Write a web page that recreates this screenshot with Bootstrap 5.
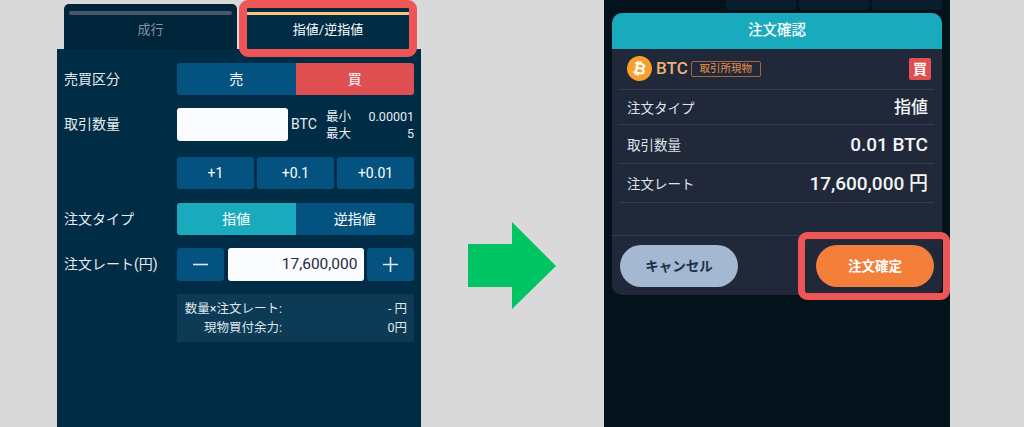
<!DOCTYPE html>
<html lang="ja">
<head>
<meta charset="UTF-8">
<title>注文確認</title>
<link rel="stylesheet" href="https://cdn.jsdelivr.net/npm/bootstrap@5.3.0/dist/css/bootstrap.min.css">
<style>
html, body { height: 427px; overflow: hidden; }
body { background: #d9d9d9; font-family: Roboto, "Noto Sans CJK JP", sans-serif; color: #e8edf2; }
.stage { height: 427px; padding-left: 57px; }

/* left phone */
.order-phone { position: relative; width: 364px; height: 427px; }
.tab-strip { height: 49px; padding: 4px 11px 0 7px; gap: 10px; }
.tab-off, .tab-on { height: 45px; border-radius: 5px 5px 0 0; font-size: 13px; padding-top: 7px; line-height: 19px; }
.tab-off { width: 173px; background: #00243a; color: #87929c; }
.tab-on { width: 162px; margin-top: 4px; height: 41px; padding-top: 0; background: #002c45; color: #fff; border-radius: 0; }
.tab-bar { height: 4px; margin: 0 5px 5px; border-radius: 2px; background: #47586a; }
.tab-on .tab-bar { height: 3px; margin: 4px 0 5px; background: #fbc77a; border-radius: 0; }
.order-panel { height: 378px; background: #002c45; padding: 14px 7px 0 7px; }
.field-row { height: 32px; margin-bottom: 13px; }
.field-tall { height: 33px; }
.field-qty { height: 33px; margin-bottom: 16px; }
.field-label { width: 113px; font-size: 14px; color: #e6ebef; flex-shrink: 0; }
.seg-btn { height: 32px; background: #04527f; color: #fff; border: 0; border-radius: 3px; font-size: 14px; padding: 0; }
.seg-left { border-radius: 3px 0 0 3px; }
.seg-right { border-radius: 0 3px 3px 0; }
.seg-buy { background: #e04f52; }
.seg-type { background: #19aabd; }
.qty-input { width: 111px; height: 33px; background: #fbfcff; border-radius: 3px; }
.qty-unit { width: 38px; padding-left: 3px; font-size: 14px; }
.qty-limits { width: 88px; font-size: 12.5px; line-height: 17px; }
.step-row { gap: 3px; height: 32px; margin-bottom: 14px; margin-left: 113px; }
.step-btn { flex: 1 1 0; }
.rate-input { width: 136px; height: 33px; background: #fbfcff; border-radius: 3px; color: #1f2c38; font-size: 15.5px; text-align: right; line-height: 33px; padding-right: 6px; }
.rate-btn { width: 47px; height: 33px; }
.rate-btn svg { display: block; margin: 0 auto; }
.info-box { margin-left: 113px; height: 48px; background: #0d3a54; padding: 6px 7px 0 7px; font-size: 12.5px; line-height: 18.5px; color: #dfe6ec; }
.info-key { width: 98px; text-align: right; white-space: nowrap; }

/* arrow */
.go-arrow { width: 88px; height: 87px; margin: 222px 48px 0 47px; }

/* right phone */
.confirm-phone { position: relative; width: 346px; height: 427px; background: #04121c; padding: 0 8px; }
.ghost-row { height: 13px; padding-left: 114px; gap: 3px; }
.ghost-btn { width: 74px; height: 10px; background: #081e2c; border-radius: 0 0 3px 3px; }
.confirm-box { height: 282px; background: #20283a; border-radius: 10px; }
.confirm-head { height: 36px; background: #19aabd; border-radius: 10px 10px 0 0; color: #fff; font-size: 14.5px; font-weight: 500; line-height: 36px; text-align: center; }
.confirm-list { padding: 0 8px 0 7px; height: 186px; }
.coin-row { height: 40.5px; border-bottom: 1px solid #333d50; padding: 0 3px 0 8px; }
.coin-mark { width: 25px; height: 25px; border-radius: 50%; background: #f7a12c; color: #fff; font-family: "DejaVu Sans", sans-serif; font-size: 16px; font-weight: 700; line-height: 25px; text-align: center; transform: rotate(12deg); }
.coin-name { font-size: 17px; font-weight: 500; color: #eab273; margin: 0 3px 0 4px; }
.spot-tag { width: 70px; height: 16px; border: 1px solid #a8683a; border-radius: 2px; font-size: 10.5px; font-weight: 500; line-height: 14px; color: #d58243; text-align: center; }
.buy-tag { width: 22px; height: 22px; background: #e04f52; border-radius: 2px; color: #fff; font-size: 14px; font-weight: 700; line-height: 22px; text-align: center; }
.line-row { border-bottom: 1px solid #333d50; padding: 2px 6px 0 8px; font-size: 13.5px; color: #dfe4ea; }
.line-a { height: 35.5px; }
.line-b { height: 38.5px; }
.line-c { height: 39.5px; }
.line-val { font-size: 19px; font-weight: 500; color: #f3f5f7; }
.line-val-sm { font-size: 17px; }
.confirm-foot { height: 60px; border-top: 1px solid #333d50; padding: 9px 8px 0 8px; }
.pill-btn { width: 118px; height: 42px; border: 0; border-radius: 21px; font-size: 13.5px; font-weight: 700; padding: 0; }
.pill-cancel { background: #a4b8d2; color: #1b3148; }
.pill-ok { background: #f47f3b; color: #fff; }

/* red call-outs over the screenshot */
.mark-tab, .mark-ok { position: absolute; border: 8px solid #ef5555; border-radius: 9px; }
.mark-tab { left: 182px; top: 0; width: 178px; height: 57px; }
.mark-ok { left: 194px; top: 232px; width: 152px; height: 68px; border-width: 7.5px; }
</style>
</head>
<body>
<div class="stage d-flex">

  <div class="order-phone">
    <div class="tab-strip d-flex">
      <div class="tab-off">
        <div class="tab-bar"></div>
        <div class="text-center">成行</div>
      </div>
      <div class="tab-on">
        <div class="tab-bar"></div>
        <div class="text-center">指値/逆指値</div>
      </div>
    </div>
    <div class="order-panel">
      <div class="field-row d-flex align-items-center">
        <div class="field-label">売買区分</div>
        <div class="d-flex flex-grow-1">
          <button type="button" class="seg-btn seg-left w-50">売</button>
          <button type="button" class="seg-btn seg-right seg-buy w-50">買</button>
        </div>
      </div>
      <div class="field-row field-qty d-flex align-items-center">
        <div class="field-label">取引数量</div>
        <div class="qty-input"></div>
        <div class="qty-unit">BTC</div>
        <div class="qty-limits">
          <div class="d-flex justify-content-between"><span>最小</span><span>0.00001</span></div>
          <div class="d-flex justify-content-between"><span>最大</span><span>5</span></div>
        </div>
      </div>
      <div class="step-row d-flex">
        <button type="button" class="seg-btn step-btn">+1</button>
        <button type="button" class="seg-btn step-btn">+0.1</button>
        <button type="button" class="seg-btn step-btn">+0.01</button>
      </div>
      <div class="field-row d-flex align-items-center">
        <div class="field-label">注文タイプ</div>
        <div class="d-flex flex-grow-1">
          <button type="button" class="seg-btn seg-left seg-type w-50">指値</button>
          <button type="button" class="seg-btn seg-right w-50">逆指値</button>
        </div>
      </div>
      <div class="field-row field-tall d-flex align-items-center">
        <div class="field-label">注文レート(円)</div>
        <div class="d-flex flex-grow-1 justify-content-between">
          <button type="button" class="seg-btn rate-btn" aria-label="minus">
            <svg width="15" height="15" viewBox="0 0 15 15"><path d="M0 7.5H15" stroke="#dfe8ef" stroke-width="1.6"/></svg>
          </button>
          <div class="rate-input">17,600,000</div>
          <button type="button" class="seg-btn rate-btn" aria-label="plus">
            <svg width="15" height="15" viewBox="0 0 15 15"><path d="M0 7.5H15M7.5 0V15" stroke="#dfe8ef" stroke-width="1.6"/></svg>
          </button>
        </div>
      </div>
      <div class="info-box">
        <div class="d-flex justify-content-between"><span class="info-key">数量×注文レート:</span><span>- 円</span></div>
        <div class="d-flex justify-content-between"><span class="info-key">現物買付余力:</span><span>0円</span></div>
      </div>
    </div>
    <div class="mark-tab"></div>
  </div>

  <svg class="go-arrow" viewBox="0 0 88 87" aria-hidden="true">
    <polygon points="0,22 44,22 44,0 88,44 44,87 44,65 0,65" fill="#00c364"/>
  </svg>

  <div class="confirm-phone">
    <div class="ghost-row d-flex">
      <div class="ghost-btn"></div>
      <div class="ghost-btn"></div>
      <div class="ghost-btn"></div>
    </div>
    <div class="confirm-box">
      <div class="confirm-head">注文確認</div>
      <div class="confirm-list">
        <div class="coin-row d-flex align-items-center">
          <div class="coin-mark">₿</div>
          <div class="coin-name">BTC</div>
          <div class="spot-tag">取引所現物</div>
          <div class="buy-tag ms-auto">買</div>
        </div>
        <div class="line-row line-a d-flex align-items-center justify-content-between"><span>注文タイプ</span><span class="line-val line-val-sm">指値</span></div>
        <div class="line-row line-b d-flex align-items-center justify-content-between"><span>取引数量</span><span class="line-val">0.01 BTC</span></div>
        <div class="line-row line-c d-flex align-items-center justify-content-between"><span>注文レート</span><span class="line-val">17,600,000 円</span></div>
      </div>
      <div class="confirm-foot d-flex justify-content-between">
        <button type="button" class="pill-btn pill-cancel">キャンセル</button>
        <button type="button" class="pill-btn pill-ok">注文確定</button>
      </div>
    </div>
    <div class="mark-ok"></div>
  </div>

</div>
<script src="https://cdn.jsdelivr.net/npm/bootstrap@5.3.0/dist/js/bootstrap.bundle.min.js"></script>
</body>
</html>
